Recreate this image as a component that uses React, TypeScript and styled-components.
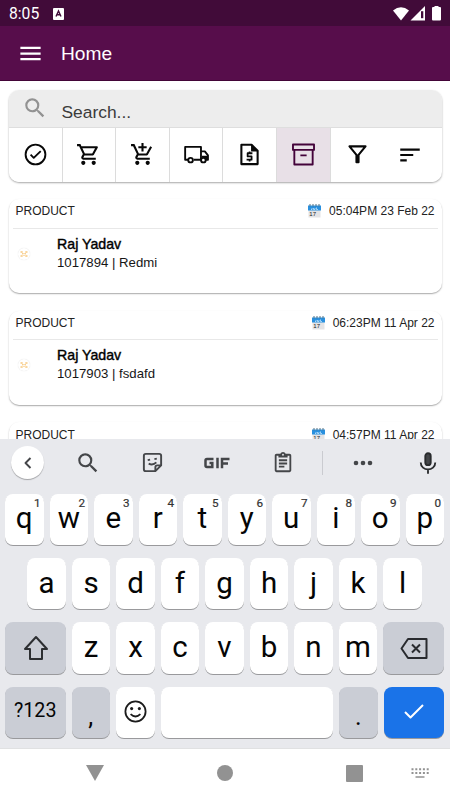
import React from 'react';
import styled, { createGlobalStyle } from 'styled-components';

const Global = createGlobalStyle`
  * { box-sizing: border-box; }
  body { margin: 0; background: #fff; }
`;

const Screen = styled.div`
  width: 450px;
  height: 800px;
  overflow: hidden;
  display: flex;
  flex-direction: column;
  background: #fff;
  font-family: "Liberation Sans", Arial, sans-serif;
  color: #111;
`;

const StatusBar = styled.div`
  flex: 0 0 26px;
  display: flex;
  align-items: center;
  padding: 2px 7px 0 9px;
  background: #410b39;
  color: #fff;
  font: 15.7px/24px Roboto, sans-serif;
`;
const Clock = styled.span`
  width: 44px;
`;
const StatusIcons = styled.div`
  margin-left: auto;
  display: flex;
  align-items: center;
`;

const AppBar = styled.header`
  flex: 0 0 55px;
  display: flex;
  align-items: center;
  gap: 17px;
  padding: 0 17px;
  background: #570d4b;
  border-bottom: 1px solid #430538;
  color: #fff;
`;
const Title = styled.h1`
  margin: 1px 0 0;
  font-size: 19.2px;
  line-height: 24px;
  font-weight: 400;
`;

const Content = styled.main`
  flex: 0 0 358px;
  overflow: hidden;
  padding: 9px 8.5px 0 9px;
`;

const SearchPanel = styled.section`
  height: 91.5px;
  border-radius: 10px;
  overflow: hidden;
  box-shadow: 0 1px 2px rgba(0, 0, 0, 0.35);
  background: #fff;
`;
const SearchField = styled.div`
  height: 37px;
  display: flex;
  gap: 13.500px;
  padding: 5px 13px 0;
  background: #ededed;
  color: #3b3b3b;
  font-size: 17.4px;
  line-height: 35px;
`;
const Filters = styled.div`
  height: 54.5px;
  display: grid;
  grid-template-columns: repeat(7, 53.6px) 52px;
  border-top: 1px solid #dedede;
`;
const Filter = styled.div<{ $active?: boolean; $divided?: boolean }>`
  display: flex;
  align-items: center;
  justify-content: center;
  background: ${(p) => (p.$active ? '#e8e0e7' : '#fff')};
  color: ${(p) => (p.$active ? '#43033a' : '#080808')};
  border-right: ${(p) => (p.$divided ? '1px solid #dcdcdc' : '0')};
`;

const Card = styled.article`
  height: 94px;
  margin-top: 17.6px;
  border-radius: 10px;
  padding: 0 4px;
  background: #fff;
  box-shadow: 0 1px 1.5px rgba(0, 0, 0, 0.34);
`;
const CardHead = styled.div`
  height: 29.5px;
  display: flex;
  align-items: center;
  padding: 0 3px 4px 2.5px;
  border-bottom: 1px solid #e8e8e8;
  font-size: 12px;
  color: #222;
`;
const When = styled.div`
  margin-left: auto;
  display: flex;
  align-items: center;
  gap: 8px;
`;
const CardBody = styled.div`
  display: flex;
  padding-top: 5px;
`;
const Avatar = styled.div`
  width: 12px;
  height: 12px;
  margin: 14px 27px 0 5px;
  display: flex;
  align-items: center;
  justify-content: center;
  border-radius: 50%;
  box-shadow: 0 0 1px rgba(0, 0, 0, 0.16);
`;
const Name = styled.div`
  font-size: 14.2px;
  line-height: 20px;
  color: #000;
  -webkit-text-stroke: 0.4px #000;
`;
const Detail = styled.div`
  font-size: 13.2px;
  line-height: 18px;
  color: #161616;
`;

const Keyboard = styled.section`
  flex: 0 0 310px;
  background: #e8e9ed;
  border-bottom: 1px solid #e0e1e2;
`;
const Tools = styled.div`
  height: 54.7px;
  display: grid;
  grid-template-columns: 55px 65px 65px 64px 68px 11px 70px 60px;
  align-items: center;
  justify-items: center;
  padding-bottom: 7px;
  color: #444649;
`;
const Back = styled.div`
  width: 33px;
  height: 33px;
  border-radius: 50%;
  display: flex;
  align-items: center;
  justify-content: center;
  background: #fff;
  box-shadow: 0 1px 1px rgba(0, 0, 0, 0.3);
`;
const ToolDivider = styled.i`
  width: 1px;
  height: 24px;
  background: #cacbd0;
`;
const KeyRow = styled.div`
  height: 51.5px;
  margin-bottom: 12.8px;
  padding-right: 1px;
  display: flex;
  justify-content: center;
  gap: 6px;
  &:last-child { margin-bottom: 0; }
`;
const Key = styled.div<{ $w?: number; $tone?: 'grey' | 'blue'; $size?: number }>`
  position: relative;
  width: ${(p) => p.$w ?? 38.5}px;
  height: 51.5px;
  border-radius: 8px;
  display: flex;
  align-items: center;
  justify-content: center;
  padding-bottom: 2px;
  background: ${(p) => (p.$tone === 'blue' ? '#1a73e8' : p.$tone === 'grey' ? '#cacdd5' : '#fff')};
  color: ${(p) => (p.$tone === 'blue' ? '#fff' : '#050505')};
  box-shadow: 0 1px 0.5px rgba(0, 0, 0, 0.34);
  font: ${(p) => p.$size ?? 29.5}px/40px Roboto, sans-serif;
`;
const Hint = styled.span`
  position: absolute;
  top: 2px;
  right: 3px;
  font-size: 11.7px;
  line-height: 14px;
  color: #333;
  -webkit-text-stroke: 0.2px #333;
`;
const Punctuation = styled.span`
  padding-top: 12px;
`;

const NavBar = styled.nav`
  flex: 0 0 51px;
  display: grid;
  grid-template-columns: 190px 70px 190px;
  justify-items: center;
  align-items: center;
  padding-bottom: 2.5px;
  color: #929292;
`;
const NavEnd = styled.div`
  justify-self: stretch;
  display: flex;
  align-items: center;
  justify-content: space-between;
  padding: 0 21px 0 86px;
`;

type IconProps = { size?: number; d: string; stroke?: number; children?: React.ReactNode };
const Icon = ({ size = 24, d, stroke = 0, children }: IconProps) => (
  <svg width={size} height={size} viewBox="0 0 24 24" fill={stroke ? 'none' : 'currentColor'}
    stroke={stroke ? 'currentColor' : 'none'} strokeWidth={stroke} strokeLinejoin="round">
    <path d={d} />
    {children}
  </svg>
);

const SEARCH = 'M15.5 14h-.79l-.28-.27A6.471 6.471 0 0 0 16 9.5 6.5 6.5 0 1 0 9.5 16c1.61 0 3.09-.59 4.23-1.57l.27.28v.79l5 4.99L20.49 19l-4.99-5zm-6 0C7.01 14 5 11.99 5 9.5S7.01 5 9.5 5 14 7.01 14 9.5 11.99 14 9.5 14z';
const CART = 'M15.55 13c.75 0 1.41-.41 1.75-1.03l3.58-6.49A.996.996 0 0 0 20.01 4H5.21l-.94-2H1v2h2l3.6 7.59-1.35 2.44C4.52 15.37 5.48 17 7 17h12v-2H7l1.1-2h7.45zM6.16 6h12.15l-2.76 5H8.53L6.16 6zM7 18c-1.1 0-1.99.9-1.99 2S5.9 22 7 22s2-.9 2-2-.9-2-2-2zm10 0c-1.1 0-1.99.9-1.99 2s.89 2 1.99 2 2-.9 2-2-.9-2-2-2z';
const CART_ADD = 'M11 9h2V6h3V4h-3V1h-2v3H8v2h3v3zm-4 9c-1.1 0-1.99.9-1.99 2S5.9 22 7 22s2-.9 2-2-.9-2-2-2zm10 0c-1.1 0-1.99.9-1.99 2s.89 2 1.99 2 2-.9 2-2-.9-2-2-2zm-8.9-5h7.45c.75 0 1.41-.41 1.75-1.03L21.16 4.96 19.42 4l-3.87 7H8.53L4.27 2H1v2h2l3.6 7.59-1.35 2.44C4.52 15.37 5.48 17 7 17h12v-2H7l1.1-2z';

const Calendar = () => (
  <svg width="13" height="14" viewBox="0 0 13 14">
    <path d="M.5 6h12v7.5H.5z" fill="#e3e3e5" />
    <path d="M0 1.5h13v5H0z" fill="#2990df" />
    <path d="M2 0v2.500M5 0v2.500M8 0v2.500M11 0v2.500" stroke="#517184" strokeWidth="1" />
    <path d="M4 4v1.5H3M5.5 4v1.5H7V4M8.5 3.5v2H10" stroke="#d6efff" strokeWidth=".7" fill="none" />
    <text x="1.3" y="12.3" fontFamily="Liberation Sans" fontSize="6" fill="#222">17</text>
  </svg>
);

const Order = ({ when, detail }: { when: string; detail: string }) => (
  <Card>
    <CardHead>
      <span>PRODUCT</span>
      <When><Calendar /><span>{when}</span></When>
    </CardHead>
    {detail && (
      <CardBody>
        <Avatar>
          <svg width="8" height="6" viewBox="0 0 8 6" fill="none" stroke="#f3ad40" strokeWidth="1">
            <path d="M.5 1H2.700M5.300 1H7.500M.5 5H2.700M5.300 5H7.500M3.200 2L2.500 3.300M4.800 2L5.500 3.300M3.500 4.300H4.500" />
          </svg>
        </Avatar>
        <div>
          <Name>Raj Yadav</Name>
          <Detail>{detail}</Detail>
        </div>
      </CardBody>
    )}
  </Card>
);

const orders = [
  { when: '05:04PM 23 Feb 22', detail: '1017894 | Redmi' },
  { when: '06:23PM 11 Apr 22', detail: '1017903 | fsdafd' },
  { when: '04:57PM 11 Apr 22', detail: '' },
];

export default function App() {
  return (
    <Screen>
      <Global />
      <StatusBar>
        <Clock>8:05</Clock>
        <svg width="11" height="12" viewBox="0 0 11 12">
          <rect width="11" height="12" rx="1" fill="#fff" />
          <path d="M3 8.5L5.5 3L8 8.5M4 6.7H7" fill="none" stroke="#410b39" strokeWidth="1.4" />
        </svg>
        <StatusIcons>
          <svg width="51" height="16" viewBox="0 0 51 16" fill="#fff">
            <path d="M1 4.500Q9-2 17 4.500L9 14.500z" />
            <path d="M33 0V14.500H18.500z" />
            <path d="M29 5.200h2.300v7H29z" fill="#410b39" />
            <path d="M42.500 1V0h4v1h1.500q1 0 1 1v11.500q0 1-1 1h-7q-1 0-1-1V2q0-1 1-1z" />
          </svg>
        </StatusIcons>
      </StatusBar>
      <AppBar>
        <Icon size={27} d="M3 18h18v-2H3v2zm0-5h18v-2H3v2zm0-7v2h18V6H3z" />
        <Title>Home</Title>
      </AppBar>
      <Content>
        <SearchPanel>
          <SearchField>
            <svg width="26" height="26" viewBox="0 0 24 24" fill="#929292"><path d={SEARCH} /></svg>
            <span>Search...</span>
          </SearchField>
          <Filters>
            <Filter $divided>
              <Icon size={25} stroke={1.8} d="M7.300 12.200l3 3L17 8.700"><circle cx="12" cy="12" r="9.500" /></Icon>
            </Filter>
            <Filter $divided><Icon size={25} d={CART} /></Filter>
            <Filter $divided><Icon size={25} d={CART_ADD} /></Filter>
            <Filter $divided>
              <Icon size={25} stroke={1.8} d="M4 17H1.100V4.700H16.300V17H9.300M16.300 9H20L23 12.800V17H21">
                <circle cx="6.300" cy="17.400" r="2.200" />
                <circle cx="18.600" cy="17.400" r="2.200" />
                <path d="M17.200 13.300H23V17H20.500L18.500 15H17.200z" fill="currentColor" stroke="none" />
              </Icon>
            </Filter>
            <Filter $divided>
              <Icon size={25} stroke={2} d="M4.200 2.700H14L19.800 8.500V21.200H4.200z">
                <path d="M13.500 2.200L20.300 9H13.500z" fill="currentColor" stroke="none" />
                <path d="M14.800 10.800H10.200V13.800H14V17H9.200M12.100 9.200V10.800M12.100 17V18.600" strokeWidth="1.7" />
              </Icon>
            </Filter>
            <Filter $active $divided>
              <Icon size={25} stroke={1.800} d="M1.900 2.400H22.100V7.600H1.900zM3.200 7.600H20.800V21.600H3.200zM9 12.800H15" />
            </Filter>
            <Filter>
              <Icon size={25} stroke={2} d="M4.300 4.200H19.700L13 12.400V19.500H11V12.400z" />
            </Filter>
            <Filter><Icon size={26} d="M3 18h6v-2H3v2zM3 6v2h18V6H3zm0 7h12v-2H3v2z" /></Filter>
          </Filters>
        </SearchPanel>
        {orders.map((o) => <Order key={o.when} {...o} />)}
      </Content>
      <Keyboard>
        <Tools>
          <Back><Icon size={20} stroke={2.3} d="M15 6L9 12L15 18" /></Back>
          <Icon size={26} d={SEARCH} />
          <Icon size={23} stroke={2} d="M5 3H19Q21 3 21 5V15L15 21H5Q3 21 3 19V5Q3 3 5 3zM21 15H17Q15 15 15 17V21">
            <path d="M7 9.500L9.500 9M14 8.500L16.500 8M8 13.200Q12.500 15.300 16 11.800" />
          </Icon>
          <svg width="26" height="12" viewBox="0 0 26 12" fill="none" stroke="currentColor" strokeWidth="2.500">
            <path d="M9.500 2H3Q1.500 2 1.500 3.500V8.500Q1.500 10 3 10H8.300V6H5.500M13.500 .8V11.200M18 11.200V2H25.500M18 6.400H24" />
          </svg>
          <Icon size={22} d="M19 2h-4.200C14.400.8 13.300 0 12 0S9.600.800 9.200 2H5C3.900 2 3 2.900 3 4v16c0 1.100.9 2 2 2h14c1.100 0 2-.9 2-2V4c0-1.100-.9-2-2-2zm-7 0a1 1 0 1 1 0 2 1 1 0 0 1 0-2zM5 20V4h2v2h10V4h2v16zM7.500 8h9v2h-9zM7.500 11.500h9v2h-9zM7.500 15h6v2h-6z" />
          <ToolDivider />
          <svg width="20" height="6" viewBox="0 0 20 6" fill="currentColor">
            <circle cx="3" cy="3" r="2.300" /><circle cx="10" cy="3" r="2.300" /><circle cx="17" cy="3" r="2.300" />
          </svg>
          <svg width="26" height="26" viewBox="0 0 24 24" fill="none" stroke="#292b2d" strokeWidth="1.700">
            <rect x="9.500" y="3" width="5" height="11" rx="2.500" fill="currentColor" />
            <path d="M5.300 11.500C5.300 20 18.700 20 18.700 11.500M12 17.500V22" />
          </svg>
        </Tools>
        <KeyRow>
          {'qwertyuiop'.split('').map((c, i) => <Key key={c}>{c}<Hint>{(i + 1) % 10}</Hint></Key>)}
        </KeyRow>
        <KeyRow>{'asdfghjkl'.split('').map((c) => <Key key={c}>{c}</Key>)}</KeyRow>
        <KeyRow>
          <Key $tone="grey" $w={60.5}>
            <svg width="26" height="26" viewBox="0 0 26 26" fill="none" stroke="#2d2f32" strokeWidth="2" strokeLinejoin="round">
              <path d="M13 3L24 15H19V25H7V15H2z" />
            </svg>
          </Key>
          {'zxcvbnm'.split('').map((c) => <Key key={c}>{c}</Key>)}
          <Key $tone="grey" $w={60.5}>
            <svg width="28" height="24" viewBox="0 0 28 24" fill="none" stroke="#292b2f" strokeWidth="2" strokeLinejoin="round">
              <path d="M8 4H26.500V23H8L1.500 13.500zM12 9.500L20 17.500M20 9.500L12 17.500" />
            </svg>
          </Key>
        </KeyRow>
        <KeyRow>
          <Key $tone="grey" $w={60.5} $size={19.7}>?123</Key>
          <Key $tone="grey" $size={25}><Punctuation>,</Punctuation></Key>
          <Key>
            <svg width="25" height="25" viewBox="0 0 24 24" fill="none" stroke="#1b1b1b" strokeWidth="1.700">
              <circle cx="12" cy="12" r="9.700" />
              <path d="M7.300 14.500Q12 19 16.700 14.500" />
              <circle cx="8.300" cy="9.200" r="1.500" fill="#1b1b1b" stroke="none" />
              <circle cx="15.700" cy="9.200" r="1.500" fill="#1b1b1b" stroke="none" />
            </svg>
          </Key>
          <Key $w={172.5} />
          <Key $tone="grey" $size={25}><Punctuation>.</Punctuation></Key>
          <Key $tone="blue" $w={60.5}>
            <Icon size={24} stroke={2} d="M3 13L8.500 18.500L21 6" />
          </Key>
        </KeyRow>
      </Keyboard>
      <NavBar>
        <svg width="18" height="16" viewBox="0 0 18 16" fill="currentColor"><path d="M0 0H18L9 16z" /></svg>
        <svg width="16" height="16" viewBox="0 0 16 16" fill="currentColor"><circle cx="8" cy="8" r="8" /></svg>
        <NavEnd>
          <svg width="17" height="17" viewBox="0 0 17 17" fill="currentColor"><rect width="17" height="17" rx="1" /></svg>
          <svg width="18" height="10" viewBox="0 0 18 10" stroke="currentColor" strokeWidth="2">
            <path d="M.5 1.200H18M.5 5H18" strokeDasharray="2 1.800" />
            <path d="M4.500 9H13.500" strokeWidth="1.500" />
          </svg>
        </NavEnd>
      </NavBar>
    </Screen>
  );
}
